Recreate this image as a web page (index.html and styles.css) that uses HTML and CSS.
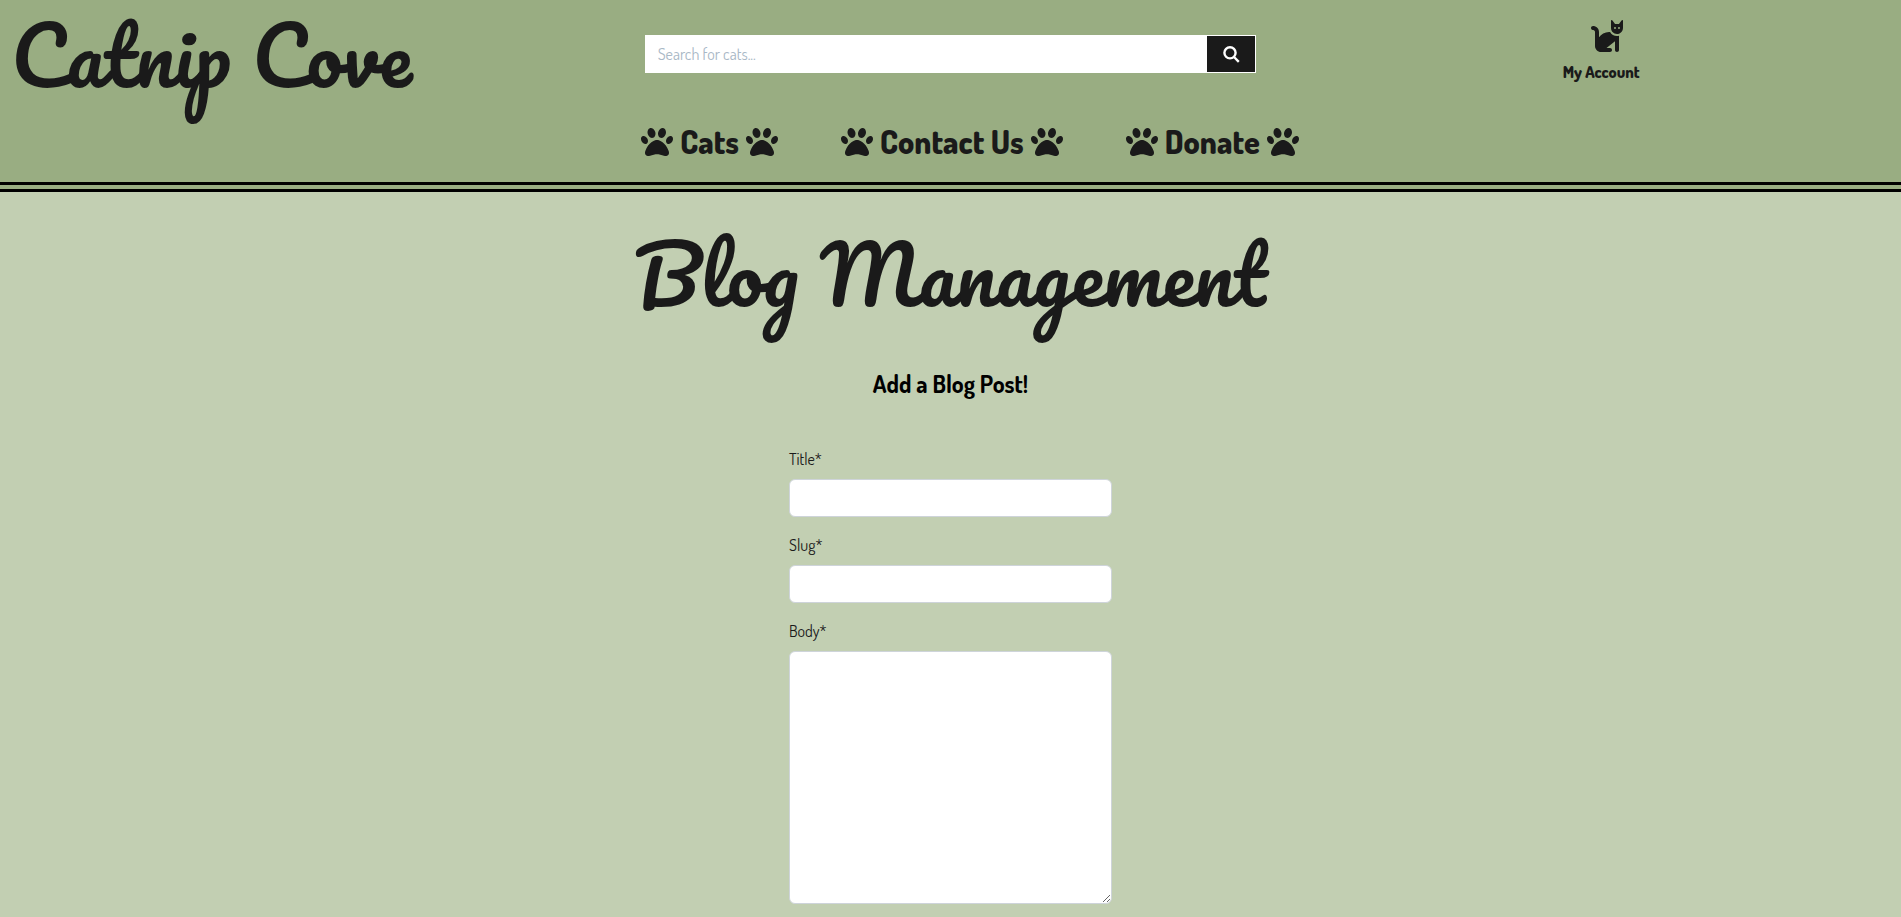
FILE: index.html
```html
<!DOCTYPE html>
<html lang="en">
<head>
<meta charset="utf-8">
<meta name="viewport" content="width=device-width, initial-scale=1">
<title>Catnip Cove - Blog Management</title>
<link rel="stylesheet" href="styles.css">
</head>
<body>
<svg class="sprite" aria-hidden="true">
  <symbol id="paw" viewBox="0 0 512 512"><path d="M226.5 92.9c14.3 42.9-.3 86.2-32.6 96.8s-70.1-15.6-84.4-58.5s.3-86.2 32.6-96.8s70.1 15.6 84.4 58.5zM100.4 198.6c18.9 32.4 14.3 70.1-10.2 84.1s-59.7-.9-78.5-33.3S-2.7 179.3 21.8 165.3s59.7 .9 78.5 33.3zM69.2 401.2C121.6 259.9 214.7 224 256 224s134.4 35.9 186.8 177.2c3.6 9.7 5.2 20.1 5.2 30.5v1.6c0 25.8-20.9 46.7-46.7 46.7c-11.5 0-22.9-1.4-34-4.2l-88-22c-15.3-3.8-31.3-3.8-46.6 0l-88 22c-11.1 2.8-22.5 4.2-34 4.2C84.9 480 64 459.1 64 433.3v-1.6c0-10.4 1.6-20.8 5.2-30.5zM421.8 282.7c-24.5-14-29.1-51.7-10.2-84.1s54-47.3 78.5-33.3s29.1 51.7 10.2 84.1s-54 47.3-78.5 33.3zM310.1 189.7c-32.3-10.6-46.9-53.9-32.6-96.8s52.1-69.1 84.4-58.5s46.9 53.9 32.6 96.8s-52.1 69.1-84.4 58.5z"/></symbol>
</svg>
<header class="site-header">
  <div class="top-row">
    <a class="logo" href="#">Catnip Cove</a>
    <form class="search" role="search">
      <input class="search-input" type="search" placeholder="Search for cats..." aria-label="Search for cats">
      <button class="search-button" type="submit" aria-label="Search">
        <svg viewBox="0 0 17 17" aria-hidden="true"><circle cx="7" cy="6.8" r="5.6"/><path d="M11 11l4.8 4.8"/></svg>
      </button>
    </form>
    <a class="account" href="#">
      <svg class="cat" viewBox="0 0 576 512" aria-hidden="true">
        <path d="M320 192h17.1c22.1 38.3 63.5 64 110.9 64c11 0 21.8-1.4 32-4v4 32V480c0 17.7-14.3 32-32 32s-32-14.3-32-32V339.200L280 448h56c17.7 0 32 14.3 32 32s-14.3 32-32 32H192c-53 0-96-43-96-96V192.500c0-16.1-12-29.8-28-31.8l-7.900-1c-17.500-2.200-30-18.200-27.800-35.700s18.200-30 35.700-27.800l7.900 1c48 6 84.100 46.800 84.100 95.300v85.300c34.400-51.700 93.200-85.800 160-85.800zm160 26.500c-10 3.500-20.800 5.500-32 5.500c-28.400 0-54-12.400-71.600-32c-3.700-4.100-7-8.500-9.900-13.200C357.300 164 352 146.600 352 128V32 12 10.700C352 4.800 356.700 .1 362.600 0h.2c3.300 0 6.400 1.600 8.400 4.200l0 .1L384 21.300l27.200 36.300L416 64h64l4.800-6.400L512 21.300 524.800 4.300l0-.1c2-2.600 5.100-4.200 8.400-4.200h.2C539.300 .1 544 4.800 544 10.700V12 32v96c0 17.300-4.600 33.600-12.600 47.600c-11.300 19.800-29.600 35.200-51.400 42.900zM432 128a16 16 0 1 0 -32 0 16 16 0 1 0 32 0zm48 16a16 16 0 1 0 0-32 16 16 0 1 0 0 32z"/>
      </svg>
      <span>My Account</span>
    </a>
  </div>
  <nav class="main-nav" aria-label="Main">
    <a href="#"><svg><use href="#paw"/></svg><span>Cats</span><svg><use href="#paw"/></svg></a>
    <a href="#"><svg><use href="#paw"/></svg><span>Contact Us</span><svg><use href="#paw"/></svg></a>
    <a href="#"><svg><use href="#paw"/></svg><span>Donate</span><svg><use href="#paw"/></svg></a>
  </nav>
</header>
<main class="content">
  <h1 class="page-title">Blog Management</h1>
  <h2 class="subtitle">Add a Blog Post!</h2>
  <form class="post-form">
    <label for="title">Title*</label>
    <input id="title" type="text" required>
    <label for="slug">Slug*</label>
    <input id="slug" type="text" required>
    <label for="body">Body*</label>
    <textarea id="body" required></textarea>
  </form>
</main>
</body>
</html>
```
FILE: styles.css
```css
* { box-sizing: border-box; }
body {
  margin: 0;
  background: #c2cfb2;
  color: #1a1a1a;
  font: 16px/24px Dosis, Roboto, sans-serif;
}
a { color: inherit; text-decoration: none; }
.sprite { display: none; }
.site-header {
  background: #99ad82;
  border-bottom: 10px double #000;
  padding-bottom: 20px;
}
.top-row {
  display: grid;
  grid-template-columns: repeat(3, 1fr);
  align-items: start;
  min-height: 122px;
}
.logo, .page-title {
  font-family: Pacifico, Lato, sans-serif;
  font-weight: 400;
  white-space: nowrap;
}
.logo {
  font-size: 80px;
  line-height: 108px;
  padding-left: 11px;
}
.search {
  display: flex;
  height: 38px;
  margin: 35px 11px 0;
  padding: 1px;
  background: #fff;
}
.search-input {
  flex: 1;
  min-width: 0;
  padding: 0 12px;
  border: 0;
  background: #fff;
  font: inherit;
}
.search-input::placeholder { color: #a9b8c6; }
.search-button {
  width: 48px;
  padding: 0;
  border: 0;
  background: #1a1a1a;
}
.search-button svg {
  width: 17px;
  height: 17px;
  display: block;
  margin: 0 auto;
  fill: none;
  stroke: #fff;
  stroke-width: 2.400;
}
.account {
  display: flex;
  flex-direction: column;
  align-items: center;
  gap: 8px;
  padding: 20px 0 0 34px;
  font-weight: 800;
}
.cat { width: 36px; height: 32px; margin-left: 12px; fill: currentColor; }
.main-nav {
  display: flex;
  justify-content: center;
  gap: 63px;
  padding-left: 39px;
  font-size: 32px;
  font-weight: 800;
  line-height: 40px;
}
.main-nav a { display: flex; align-items: center; gap: 7px; }
.main-nav svg { width: 32px; height: 32px; fill: currentColor; }
.content { text-align: center; }
.page-title {
  margin: 0;
  padding-top: 13px;
  font-size: 80px;
  line-height: 136px;
}
.subtitle {
  margin: 27px 0 0;
  color: #000;
  font-size: 24px;
  line-height: 32px;
}
.post-form {
  display: flex;
  flex-direction: column;
  width: 323px;
  margin: 47px auto 0;
  text-align: left;
}
.post-form input, .post-form textarea {
  width: 100%;
  margin: 8px 0 16px;
  padding: 8px 12px;
  border: 1px solid #ced4da;
  border-radius: 6px;
  background: #fff;
  font: inherit;
}
.post-form input { height: 38px; }
.post-form textarea { height: 253px; margin-bottom: 0; resize: vertical; }
```
